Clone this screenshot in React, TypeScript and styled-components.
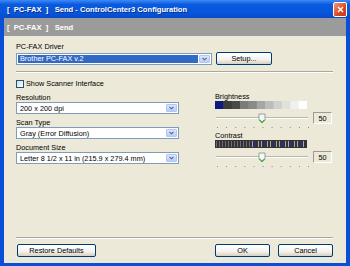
import React, {FC} from 'react';
import styled, {createGlobalStyle} from 'styled-components';

const GlobalStyle = createGlobalStyle`
  html, body {
    margin: 0;
    padding: 0;
    background: #ffffff;
  }
  body {
    font-family: 'Liberation Sans', Arial, sans-serif;
  }
`;

const Window = styled.div`
  width: 350px;
  height: 266px;
  display: flex;
  flex-direction: column;
  background: #0a4fd8;
  overflow: hidden;
`;

const TitleBar = styled.div`
  height: 18px;
  flex: none;
  display: flex;
  align-items: center;
  justify-content: space-between;
  padding: 0 3px 0 7px;
  background: linear-gradient(#3d8bf5 0%, #0a5ae0 25%, #0656dc 70%, #0a4ac8 100%);
  color: #ffffff;
  font-weight: bold;
  font-size: 7.6px;
  white-space: pre;
  text-shadow: 1px 1px 0 #0a2f8a;
`;

const CloseButton = styled.div`
  width: 12px;
  height: 13px;
  border: 1px solid #ffffff;
  border-radius: 2px;
  background: linear-gradient(135deg, #f09a7c, #d9491f 60%, #c33a13);
  display: flex;
  align-items: center;
  justify-content: center;
`;

const Frame = styled.div`
  flex: 1;
  margin: 0 4px 3px 4px;
  background: #ece9d8;
  display: flex;
  flex-direction: column;
`;

const Header = styled.div`
  height: 18px;
  flex: none;
  display: flex;
  align-items: center;
  padding-left: 3px;
  background: #9b9b9b;
  color: #ffffff;
  font-weight: bold;
  font-size: 7.6px;
  white-space: pre;
`;

const Content = styled.div`
  flex: 1;
  display: flex;
  flex-direction: column;
  padding: 6px 13px 6px 12px;
  font-size: 7.3px;
  color: #000000;
`;

const Label = styled.div<{$top?: number}>`
  height: 9px;
  line-height: 9px;
  margin-top: ${p => p.$top ?? 0}px;
  white-space: pre;
`;

const Row = styled.div<{$gap?: number; $top?: number}>`
  display: flex;
  align-items: center;
  gap: ${p => p.$gap ?? 0}px;
  margin-top: ${p => p.$top ?? 0}px;
`;

const Select = styled.div<{$width: number}>`
  width: ${p => p.$width}px;
  height: 12px;
  box-sizing: border-box;
  border: 1px solid #7f9db9;
  background: #ffffff;
  display: flex;
  align-items: stretch;
  padding: 1px;
`;

const SelectText = styled.div<{$selected?: boolean}>`
  flex: 1;
  display: flex;
  align-items: center;
  padding-left: 2px;
  white-space: pre;
  background: ${p => (p.$selected ? '#316ac5' : 'transparent')};
  color: ${p => (p.$selected ? '#ffffff' : '#000000')};
  margin-right: 1px;
`;

const ArrowButton = styled.div`
  width: 11px;
  flex: none;
  border-radius: 1px;
  background: linear-gradient(#dbe5fd, #b9cdf8);
  border: 1px solid #b1c6f5;
  box-sizing: border-box;
  display: flex;
  align-items: center;
  justify-content: center;
`;

const Button = styled.div<{$width: number}>`
  width: ${p => p.$width}px;
  height: 13px;
  box-sizing: border-box;
  border: 1px solid #003c74;
  border-radius: 2px;
  background: linear-gradient(#ffffff, #f3f2ec 60%, #d6d0c5);
  display: flex;
  align-items: center;
  justify-content: center;
  white-space: pre;
`;

const Separator = styled.div<{$top: number}>`
  height: 1px;
  margin-top: ${p => p.$top}px;
  background: #aca899;
  border-bottom: 1px solid #ffffff;
`;

const CheckBox = styled.div`
  width: 8px;
  height: 8px;
  box-sizing: border-box;
  border: 1px solid #1c5180;
  background: linear-gradient(135deg, #dcdbd5, #ffffff);
`;

const Columns = styled.div`
  display: flex;
  justify-content: space-between;
  margin-top: 4px;
`;

const Column = styled.div<{$width: number}>`
  width: ${p => p.$width}px;
  display: flex;
  flex-direction: column;
`;

const ValueBox = styled.div`
  width: 19px;
  height: 12px;
  box-sizing: border-box;
  border: 1px solid #9c9a94;
  border-right-color: #ffffff;
  border-bottom-color: #ffffff;
  background: #ece9d8;
  display: flex;
  align-items: center;
  justify-content: center;
  margin-top: -4px;
`;

const Spacer = styled.div`
  flex: 1;
`;

const Footer = styled.div`
  display: flex;
  align-items: center;
  margin-top: 5px;
  padding-left: 1px;
`;

const Arrow: FC = () => (
  <svg width="5" height="4" viewBox="0 0 5 4">
    <path d="M0.5 0.8 L2.5 2.8 L4.5 0.8" stroke="#4d6185" strokeWidth="1.1" fill="none" />
  </svg>
);

const Combo: FC<{width: number; text: string; selected?: boolean}> = ({width, text, selected}) => (
  <Select $width={width}>
    <SelectText $selected={selected}>{text}</SelectText>
    <ArrowButton>
      <Arrow />
    </ArrowButton>
  </Select>
);

const brightnessColors = [
  '#0b1a7c', '#3d3d3d', '#4a4a4a', '#7b7b7b', '#8a8a8a', '#a6a6a6',
  '#bdbdbd', '#d0d0d0', '#e1e1dc', '#f0f0ee', '#ffffff',
];

const BrightnessBar: FC = () => {
  const w = 92 / brightnessColors.length;
  return (
    <svg width="92" height="8" style={{display: 'block'}}>
      {brightnessColors.map((c, i) => (
        <rect key={i} x={i * w} y={0} width={w + 0.5} height={8} fill={c} />
      ))}
    </svg>
  );
};

const ContrastBar: FC = () => {
  const stripes = Array.from({length: 30}, (_, i) => i);
  return (
    <svg width="92" height="8" style={{display: 'block'}}>
      <rect x={0} y={0} width={92} height={8} fill="#333333" />
      {stripes.map(i => (
        <rect
          key={i}
          x={1 + i * 3}
          y={1}
          width={1}
          height={6}
          fill={i % 3 === 1 && i > 12 ? '#1f2fa0' : i < 12 ? '#6a6a78' : '#a8a8b4'}
        />
      ))}
    </svg>
  );
};

const Slider: FC = () => {
  const ticks = Array.from({length: 11}, (_, i) => i);
  return (
    <svg width="94" height="20" style={{display: 'block'}}>
      <rect x={1} y={7} width={92} height={2} fill="#b9b6a8" />
      <rect x={1} y={8} width={92} height={1} fill="#ffffff" />
      <path d="M44 4 L50 4 L50 10 L47 13 L44 10 Z" fill="#f7f7f4" stroke="#7e8a99" strokeWidth="0.8" />
      <path d="M44.5 10 L47 12.5 L49.5 10" fill="none" stroke="#3cb23c" strokeWidth="1.2" />
      {ticks.map(i => (
        <rect key={i} x={2 + i * 9.1} y={17} width={1} height={1} fill="#8a8a8a" />
      ))}
    </svg>
  );
};

const App: FC = () => (
  <>
    <GlobalStyle />
    <Window>
      <TitleBar>
        <span>{'[  PC-FAX  ]   Send - ControlCenter3 Configuration'}</span>
        <CloseButton>
          <svg width="7" height="7" viewBox="0 0 7 7">
            <path d="M1 1 L6 6 M6 1 L1 6" stroke="#ffffff" strokeWidth="1.4" />
          </svg>
        </CloseButton>
      </TitleBar>
      <Frame>
        <Header>{'[  PC-FAX  ]   Send'}</Header>
        <Content>
          <Label>PC-FAX Driver</Label>
          <Row $gap={4} $top={1}>
            <Combo width={196} text="Brother PC-FAX v.2" selected />
            <Button $width={56}>Setup...</Button>
          </Row>
          <Separator $top={6} />
          <Row $gap={2} $top={6}>
            <CheckBox />
            <span>Show Scanner Interface</span>
          </Row>
          <Columns>
            <Column $width={163}>
              <Label $top={1}>Resolution</Label>
              <Combo width={163} text="200 x 200 dpi" />
              <Label $top={4}>Scan Type</Label>
              <Combo width={163} text="Gray (Error Diffusion)" />
              <Label $top={4}>Document Size</Label>
              <Combo width={163} text="Letter 8 1/2 x 11 in (215.9 x 279.4 mm)" />
            </Column>
            <Column $width={118}>
              <Label>Brightness</Label>
              <BrightnessBar />
              <Row $gap={4} $top={1}>
                <Slider />
                <ValueBox>50</ValueBox>
              </Row>
              <Label $top={1}>Contrast</Label>
              <ContrastBar />
              <Row $gap={4} $top={1}>
                <Slider />
                <ValueBox>50</ValueBox>
              </Row>
            </Column>
          </Columns>
          <Spacer />
          <Separator $top={0} />
          <Footer>
            <Button $width={79}>Restore Defaults</Button>
            <Spacer />
            <Row $gap={8}>
              <Button $width={55}>OK</Button>
              <Button $width={55}>Cancel</Button>
            </Row>
          </Footer>
        </Content>
      </Frame>
    </Window>
  </>
);

export default App;
